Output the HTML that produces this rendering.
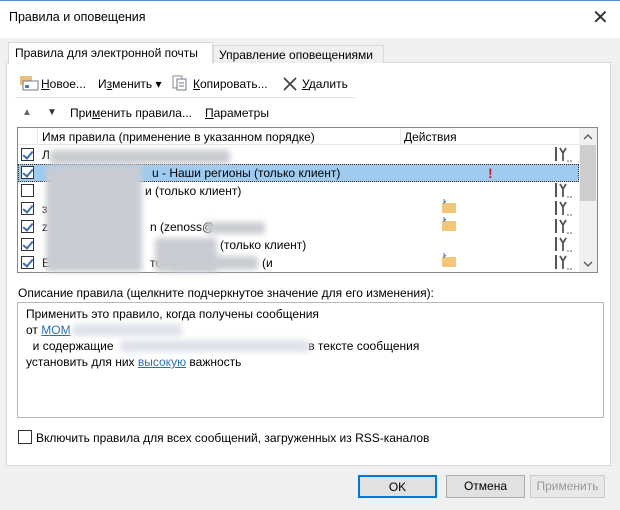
<!DOCTYPE html>
<html><head><meta charset="utf-8"><style>
*{box-sizing:border-box}
body{margin:0;width:620px;height:510px;overflow:hidden;font-family:"Liberation Sans","DejaVu Sans",sans-serif;font-size:12px;color:#000;background:#f0f0f0;position:relative}
.a{position:absolute;white-space:nowrap}
.blur{position:absolute;background:#c9ccd2;filter:blur(3px);border-radius:3px}
.cb{position:absolute;width:13px;height:13px;border:1px solid #333;background:#fff}
.ck::after{content:"";position:absolute;left:3px;top:0px;width:4px;height:8px;border:solid #3a6fb0;border-width:0 2px 2px 0;transform:rotate(40deg)}
.btn{position:absolute;height:23px;border:1px solid #adadad;background:#e1e1e1;text-align:center;line-height:21px}
u{text-decoration:underline}
.wr{position:absolute;left:556px}
</style></head><body>
<div class="a" style="left:0;top:0;width:620px;height:38px;background:#fff;border-top:1px solid #4a90d9"></div>
<div class="a" style="left:9px;top:10px;font-size:12.5px">Правила и оповещения</div>
<div class="a" style="left:592px;top:5px;font-size:20px;color:#333">✕</div>
<div class="a" style="left:6px;top:62px;width:605px;height:404px;background:#fff;border:1px solid #d9d9d9"></div>
<div class="a" style="left:8px;top:42px;width:205px;height:22px;background:#fff;border:1px solid #d9d9d9;border-bottom:none;padding:3px 0 0 6px">Правила для электронной почты</div>
<div class="a" style="left:213px;top:45px;width:171px;height:18px;background:#f0f0f0;border:1px solid #d9d9d9;border-bottom:none;padding:2px 0 0 5px">Управление оповещениями</div>
<svg class="a" style="left:19px;top:75px" width="20" height="16"><rect x="1" y="1" width="12" height="9" fill="#e8c27a"/><rect x="4" y="6" width="15" height="9" fill="#fff" stroke="#6a7a8a"/><rect x="6" y="10" width="4" height="3" fill="#4a7cc0"/></svg>
<div class="a" style="left:41px;top:77px"><u>Н</u>овое...</div>
<div class="a" style="left:98px;top:77px">И<u>з</u>менить ▾</div>
<svg class="a" style="left:172px;top:75px" width="16" height="16"><rect x="1" y="1" width="9" height="12" fill="#fff" stroke="#888"/><rect x="5" y="4" width="9" height="11" fill="#fff" stroke="#6a7a8a"/><line x1="7" y1="8" x2="12" y2="8" stroke="#6a7a8a"/><line x1="7" y1="11" x2="12" y2="11" stroke="#6a7a8a"/></svg>
<div class="a" style="left:193px;top:77px"><u>К</u>опировать...</div>
<svg class="a" style="left:282px;top:76px" width="16" height="16"><path d="M2 2L14 14M14 2L2 14" stroke="#444" stroke-width="1.8"/></svg>
<div class="a" style="left:302px;top:77px"><u>У</u>далить</div>
<div class="a" style="left:15px;top:97px;width:340px;height:1px;background:#e3e3e3"></div>
<div class="a" style="left:22px;top:107px;font-size:10px;color:#666">▲</div>
<div class="a" style="left:47px;top:107px;font-size:10px;color:#333">▼</div>
<div class="a" style="left:70px;top:106px">При<u>м</u>енить правила...</div>
<div class="a" style="left:205px;top:106px"><u>П</u>араметры</div>
<div class="a" style="left:17px;top:127px;width:581px;height:146px;background:#fff;border:1px solid #828790"></div>
<div class="a" style="left:18px;top:128px;width:561px;height:17px;border-bottom:1px solid #e5e5e5"></div>
<div class="a" style="left:37px;top:128px;width:1px;height:17px;background:#e5e5e5"></div>
<div class="a" style="left:400px;top:128px;width:1px;height:17px;background:#e5e5e5"></div>
<div class="a" style="left:42px;top:130px">Имя правила (применение в указанном порядке)</div>
<div class="a" style="left:404px;top:130px">Действия</div>
<div class="a" style="left:579px;top:128px;width:18px;height:144px;background:#f0f0f0"></div>
<svg class="a" style="left:583px;top:133px" width="10" height="8"><path d="M1 6L5 2L9 6" stroke="#555" fill="none" stroke-width="1.3"/></svg>
<div class="a" style="left:580px;top:145px;width:16px;height:56px;background:#cdcdcd"></div>
<svg class="a" style="left:583px;top:260px" width="10" height="8"><path d="M1 2L5 6L9 2" stroke="#555" fill="none" stroke-width="1.3"/></svg>
<div class="a" style="left:18px;top:164px;width:561px;height:18px;background:#9fcbf0;border:1px dotted #333"></div>
<div class="cb ck" style="left:21px;top:148px"></div>
<div class="cb ck" style="left:21px;top:166px"></div>
<div class="cb" style="left:21px;top:184px"></div>
<div class="cb ck" style="left:21px;top:202px"></div>
<div class="cb ck" style="left:21px;top:220px"></div>
<div class="cb ck" style="left:21px;top:238px"></div>
<div class="cb ck" style="left:21px;top:256px"></div>
<div class="a" style="left:42px;top:148px">Л</div>
<div class="a" style="left:152px;top:166px">u - Наши регионы  (только клиент)</div>
<div class="a" style="left:145px;top:184px">и  (только клиент)</div>
<div class="a" style="left:42px;top:202px">з</div>
<div class="a" style="left:42px;top:220px">z</div>
<div class="a" style="left:150px;top:220px">n (zenoss@</div>
<div class="a" style="left:220px;top:238px">(только клиент)</div>
<div class="a" style="left:42px;top:256px">E</div>
<div class="a" style="left:150px;top:256px">то</div>
<div class="a" style="left:262px;top:256px">(и</div>
<div class="blur" style="left:50px;top:150px;width:180px;height:14px"></div>
<div class="blur" style="left:46px;top:166px;width:96px;height:106px"></div>
<div class="blur" style="left:155px;top:238px;width:62px;height:34px"></div>
<div class="blur" style="left:205px;top:222px;width:60px;height:12px"></div>
<div class="blur" style="left:170px;top:256px;width:88px;height:14px"></div>
<div class="a" style="left:488px;top:165px;color:#d42020;font-weight:bold;font-size:14px">!</div>
<svg class="a" style="left:441px;top:198px" width="16" height="16"><rect x="1" y="5" width="14" height="10" fill="#f0c878"/><path d="M3 1 v4 l2 -2" stroke="#3a6fb0" fill="none"/></svg>
<svg class="a" style="left:441px;top:216px" width="16" height="16"><rect x="1" y="5" width="14" height="10" fill="#f0c878"/><path d="M3 1 v4 l2 -2" stroke="#3a6fb0" fill="none"/></svg>
<svg class="a" style="left:441px;top:252px" width="16" height="16"><rect x="1" y="5" width="14" height="10" fill="#f0c878"/><path d="M3 1 v4 l2 -2" stroke="#3a6fb0" fill="none"/></svg>
<svg class="a" style="left:554px;top:146px" width="22" height="126">
<defs><g id="w"><rect x="1" y="1" width="2" height="14" fill="#555"/><path d="M6 2 L9 7 L12 2 M9 7 V15" stroke="#555" stroke-width="1.8" fill="none"/><circle cx="14" cy="15" r="0.8" fill="#555"/><circle cx="17" cy="15" r="0.8" fill="#555"/></g></defs>
<use href="#w" y="0"/><use href="#w" y="36"/><use href="#w" y="54"/><use href="#w" y="72"/><use href="#w" y="90"/><use href="#w" y="108"/></svg>
<div class="a" style="left:18px;top:286px">Описание правила (щелкните подчеркнутое значение для его изменения):</div>
<div class="a" style="left:17px;top:302px;width:587px;height:116px;background:#fff;border:1px solid #b8b8b8"></div>
<div class="a" style="left:26px;top:306px;line-height:16px">Применить это правило, когда получены сообщения<br>от <span style="color:#2c6fb5;text-decoration:underline">MOM</span><br>&nbsp; и содержащие <span style="display:inline-block;width:188px"></span> в тексте сообщения<br>установить для них <span style="color:#2c6fb5;text-decoration:underline">высокую</span> важность</div>
<div class="blur" style="left:72px;top:324px;width:110px;height:12px;background:#dfe3ea"></div>
<div class="blur" style="left:120px;top:340px;width:190px;height:12px;background:#dfe3ea"></div>
<div class="cb" style="left:18px;top:430px;width:14px;height:14px"></div>
<div class="a" style="left:36px;top:431px">Включить правила для всех сообщений, загруженных из RSS-каналов</div>
<div class="btn" style="left:358px;top:475px;width:79px;border:2px solid #0078d7">OK</div>
<div class="btn" style="left:446px;top:475px;width:79px">Отмена</div>
<div class="btn" style="left:530px;top:475px;width:75px;color:#9a9a9a;border-color:#cccccc;background:#e8e8e8">Применить</div>
</body></html>
